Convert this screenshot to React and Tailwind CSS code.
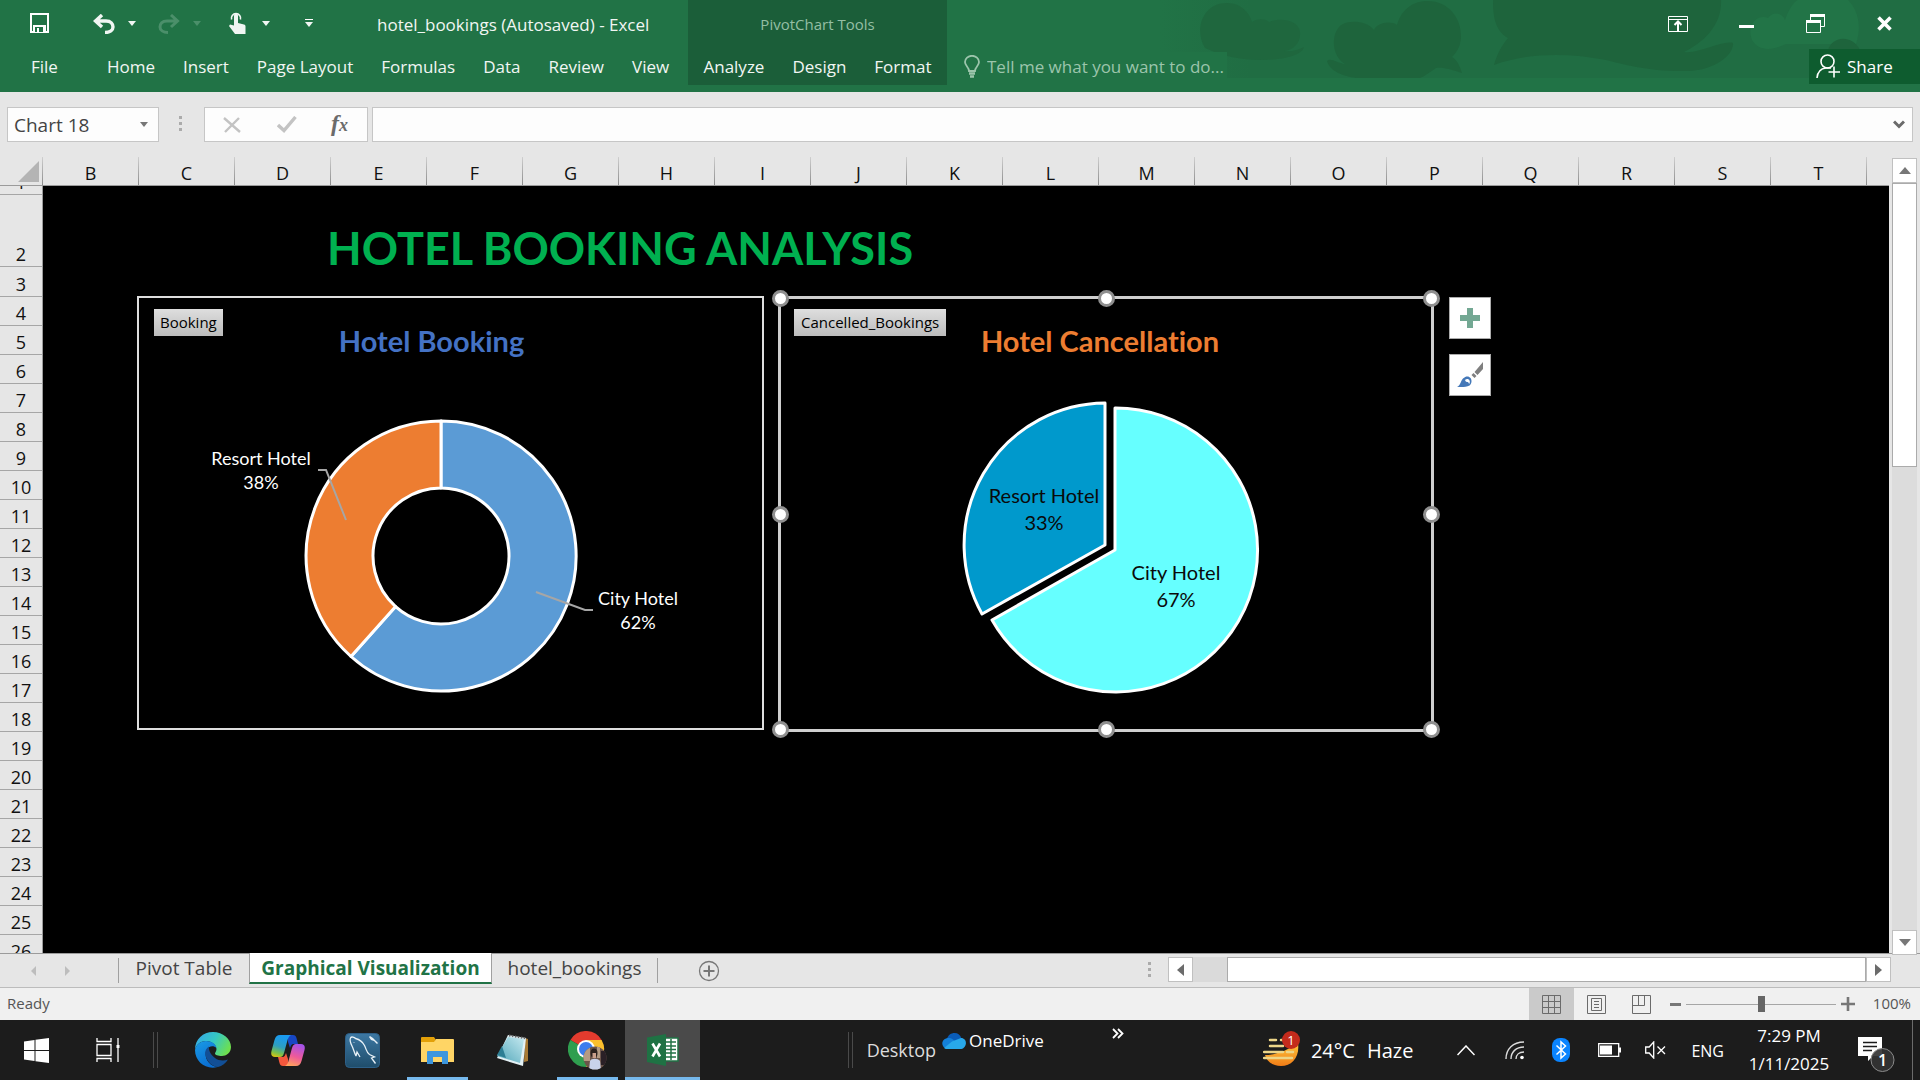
import React from 'react';

const columns = 'BCDEFGHIJKLMNOPQRST'.split('');
const rows = Array.from({ length: 23 }, (_, i) => i + 4);
const mainTabs = ['Home', 'Insert', 'Page Layout', 'Formulas', 'Data', 'Review', 'View'];
const chartTabs = ['Analyze', 'Design', 'Format'];

function Caret({ className = '' }) {
  return (
    <svg className={className} width="8" height="5" viewBox="0 0 8 5" fill="currentColor" aria-hidden="true">
      <path d="M0 0h8L4 5z" />
    </svg>
  );
}

function HeaderArt() {
  return (
    <svg className="pointer-events-none absolute right-0 top-0" width="760" height="78" viewBox="1160 0 760 78" aria-hidden="true">
      <defs>
        <linearGradient id="shade" x1="0" x2="1" y1="0" y2="0">
          <stop offset="0" stopColor="#217346" />
          <stop offset="0.12" stopColor="#206d43" />
          <stop offset="1" stopColor="#206d43" />
        </linearGradient>
      </defs>
      <rect x="1160" width="760" height="78" fill="url(#shade)" />
      <g fill="#1f673e">
        <path d="M1205 48C1194 30 1202 3 1227 3C1242 3 1250 14 1252 22C1258 18 1266 19 1269 22C1280 17 1299 20 1300 32C1301 42 1294 50 1284 51C1292 52 1298 50 1304 47C1302 56 1280 60 1262 60C1240 60 1222 56 1205 48z" />
      </g>
      <g fill="#1e643c">
        <path d="M1345 64C1330 55 1331 30 1343 24C1351 20 1367 21 1374 30C1377 23 1390 20 1397 25C1402 8 1414 1 1428 1C1448 1 1462 18 1461 38C1460 48 1456 53 1452 57C1457 60 1460 66 1462 73C1452 70 1444 67 1436 68C1430 72 1425 76 1420 78H1356C1344 76 1330 72 1327 61C1330 57 1338 63 1345 64z" />
        <path d="M1493 0H1721C1722 18 1712 38 1684 52C1700 54 1722 40 1733 43C1734 54 1716 70 1688 71C1650 72 1622 64 1606 60C1570 53 1530 52 1494 65C1497 54 1502 45 1508 38C1494 30 1493 14 1493 0z" />
      </g>
      <path d="M1752 40C1746 24 1758 14 1768 18C1774 10 1783 14 1785 20C1790 6 1796 0 1798 0H1848C1858 10 1862 26 1856 44H1786C1770 52 1758 50 1752 40z" fill="#227447" />
      <path d="M1828 50C1832 36 1852 34 1860 50z" fill="#1e643c" />
    </svg>
  );
}

function TitleBar() {
  return (
    <header className="relative flex h-[92px] shrink-0 bg-[#217346] text-[17px] text-[#f1f6f3]">
      <HeaderArt />
      <div className="relative w-[688px] shrink-0">
        <div className="flex h-[49px] items-center">
          <button aria-label="Save" className="ml-[30px] pb-1">
            <svg width="19" height="20" viewBox="0 0 19 20" fill="none" aria-hidden="true">
              <path d="M1 1h17v18H1z" stroke="#fff" strokeWidth="2" />
              <path d="M3 12h13v7H3z" fill="#fff" />
              <path d="M5 14h8v5H5z" fill="#217346" />
              <path d="M7 15h2v4H7z" fill="#fff" />
            </svg>
          </button>
          <button aria-label="Undo" className="ml-11 pb-0.5">
            <svg width="22" height="20" viewBox="0 0 22 20" fill="none" stroke="currentColor" strokeWidth="3.4" aria-hidden="true">
              <path d="M9 1L2.500 7L9 13M3 7H13C18 7 20 10 20 13C20 16 17 18.500 12 18.500" />
            </svg>
          </button>
          <button aria-label="Undo history" className="ml-[13px] pb-0.5"><Caret /></button>
          <button aria-label="Redo" className="ml-[22px] pb-0.5 text-[#4b8f6a]">
            <svg width="22" height="20" viewBox="0 0 22 20" fill="none" stroke="currentColor" strokeWidth="3" aria-hidden="true">
              <path d="M13 1L19.500 7L13 13M19 7H9C4 7 2 10 2 13C2 16 5 18.500 10 18.500" />
            </svg>
          </button>
          <button aria-label="Redo history" className="ml-[13px] pb-0.5 text-[#4b8f6a]"><Caret /></button>
          <button aria-label="Touch or mouse mode" className="ml-7 pb-1">
            <svg width="17" height="22" viewBox="0 0 17 22" fill="none" aria-hidden="true">
              <path d="M5 9V3.500a2 2 0 0 1 4 0V11l6 1.500c1 .4 1.500 1 1.500 2V22H6L0 14l1-1.500 4 1z" fill="currentColor" />
              <path d="M2.600 7.500a4.600 4.600 0 1 1 8.800 0" stroke="currentColor" strokeWidth="1.600" />
            </svg>
          </button>
          <button aria-label="Touch mode options" className="ml-4 pb-0.5"><Caret /></button>
          <button aria-label="Customize Quick Access Toolbar" className="ml-[35px] flex flex-col gap-0.5 pb-1">
            <span className="h-px w-2 bg-white" />
            <Caret />
          </button>
          <h1 className="ml-16 whitespace-nowrap">hotel_bookings (Autosaved) - Excel</h1>
        </div>
        <nav className="flex h-[35px] items-center whitespace-nowrap" aria-label="Ribbon">
          <button className="ml-[31px] mr-[21px]">File</button>
          <div className="ml-7 flex gap-7">
            {mainTabs.map((t) => <button key={t}>{t}</button>)}
          </div>
        </nav>
      </div>
      <div className="relative h-[85px] w-[259px] shrink-0 bg-[#1b5e39]">
        <div className="flex h-[49px] items-center justify-center text-[15px] text-[#94bea4]">PivotChart Tools</div>
        <nav className="flex h-[35px] items-center justify-center gap-7" aria-label="PivotChart Tools">
          {chartTabs.map((t) => <button key={t}>{t}</button>)}
        </nav>
      </div>
      <div className="relative min-w-0 flex-1">
        <div className="flex h-[47px] items-center justify-end text-white">
          <button aria-label="Ribbon display options">
            <svg width="20" height="16" viewBox="0 0 20 16" fill="none" stroke="currentColor" strokeWidth="1" aria-hidden="true">
              <path d="M.5.5h19v15H.5zM.5 3.500h19" />
              <path d="M10 15V6M6.500 9L10 5.500 13.500 9" strokeWidth="2" />
            </svg>
          </button>
          <button aria-label="Minimize" className="ml-[51px] mt-1.5 h-[3px] w-[15px] bg-white" />
          <button aria-label="Restore" className="ml-[52px]">
            <svg width="19" height="19" viewBox="0 0 19 19" fill="none" stroke="currentColor" aria-hidden="true">
              <path d="M.5 8v10.500h14V7" />
              <path d="M0 7.500h15" strokeWidth="3" />
              <path d="M4.500 6V1M18.500 1v11.500H15" />
              <path d="M4 1.500h15" strokeWidth="3" />
            </svg>
          </button>
          <button aria-label="Close" className="ml-[52px] mr-[28px]">
            <svg width="15" height="15" viewBox="0 0 15 15" stroke="currentColor" strokeWidth="3.600" aria-hidden="true">
              <path d="M1.500 1.500l12 12M13.500 1.500l-12 12" />
            </svg>
          </button>
        </div>
        <div className="mt-0.5 flex h-[35px] items-center justify-between">
          <label className="flex h-[29px] items-center gap-[7px] bg-[#217346] pl-[17px] text-[#9cc5ac]">
            <svg width="16" height="23" viewBox="0 0 16 23" fill="none" stroke="currentColor" strokeWidth="1.800" aria-hidden="true">
              <path d="M5 16c0-4-4-5-4-9a7 6.200 0 0 1 14 0c0 4-4 5-4 9z" />
              <path d="M5 18.500h6M6 21.500h4" strokeWidth="2.500" />
            </svg>
            <input className="w-60 bg-transparent outline-none placeholder:text-[#9cc5ac]" placeholder="Tell me what you want to do..." aria-label="Tell me what you want to do" />
          </label>
          <button className="flex h-[35px] w-[111px] items-center gap-[7px] bg-[#0e5c2f] pl-[7px] text-white">
            <svg width="24" height="25" viewBox="0 0 24 25" fill="none" stroke="currentColor" strokeWidth="1.600" aria-hidden="true">
              <circle cx="11.500" cy="7.500" r="6.500" />
              <path d="M1 24c.5-6 4-9.500 9-10h5M18 12.500v11M12.500 18H24" />
            </svg>
            Share
          </button>
        </div>
      </div>
    </header>
  );
}

function Dots({ className }) {
  return (
    <span className={`flex flex-col gap-[3px] ${className}`}>
      <i className="size-[3px] bg-[#ababab]" />
      <i className="size-[3px] bg-[#ababab]" />
      <i className="size-[3px] bg-[#ababab]" />
    </span>
  );
}

function FormulaBar() {
  return (
    <div className="flex h-[65px] shrink-0 items-start bg-[#e6e6e6] pl-[7px] pr-[7px] pt-[15px]">
      <div className="flex h-[35px] w-[152px] items-center border border-[#c6c6c6] bg-[#fdfdfd] text-[#444]">
        <input aria-label="Name box" defaultValue="Chart 18" className="w-[132px] bg-transparent pl-1.5 pt-px text-[19px] outline-none" />
        <button aria-label="Name list" className="text-[#777]"><Caret /></button>
      </div>
      <Dots className="ml-5 mt-[9px]" />
      <div className="ml-[22px] flex h-[35px] w-[164px] items-center border border-[#c6c6c6] bg-[#fdfdfd]">
        <button aria-label="Cancel" className="ml-[18px]">
          <svg width="18" height="16" viewBox="0 0 18 16" stroke="#c3c3c3" strokeWidth="2.400" aria-hidden="true">
            <path d="M1 1l16 14M16 1L2 15" />
          </svg>
        </button>
        <button aria-label="Enter" className="ml-9">
          <svg width="20" height="17" viewBox="0 0 20 17" fill="none" stroke="#c3c3c3" strokeWidth="3.400" aria-hidden="true">
            <path d="M1 9l6 5.500L18.500 1" />
          </svg>
        </button>
        <button aria-label="Insert function" className="ml-[34px] pb-0.5 font-['Liberation_Serif',serif] text-[24px] font-bold italic leading-6 text-[#6b6b6b]">
          f<span className="text-[18px]">x</span>
        </button>
      </div>
      <div className="ml-1 flex h-[35px] min-w-0 flex-1 items-center border border-[#c6c6c6] bg-[#fdfdfd]">
        <input aria-label="Formula" className="min-w-0 flex-1 bg-transparent px-2 outline-none" />
        <button aria-label="Expand formula bar" className="mr-[7px]">
          <svg width="12" height="9" viewBox="0 0 12 9" fill="none" stroke="#6b6b6b" strokeWidth="3" aria-hidden="true">
            <path d="M1 1.500l5 5 5-5" />
          </svg>
        </button>
      </div>
    </div>
  );
}

function ColumnHeaders() {
  return (
    <div className="flex h-[29px] shrink-0 overflow-hidden border-b border-[#9b9b9b] bg-[#e6e6e6] text-[18px] text-[#111]">
      <button aria-label="Select all" className="flex w-[42px] shrink-0 items-end justify-end pb-[3px] pr-[3px]">
        <svg width="21" height="21" viewBox="0 0 21 21" fill="#b4b4b4" aria-hidden="true"><path d="M21 0v21H0z" /></svg>
      </button>
      <span className="w-px shrink-0 bg-linear-to-t from-[#8c8c8c] to-[#cfcfcf]" />
      {columns.map((c) => (
        <div key={c} className="flex w-24 shrink-0">
          <span className="flex-1 pt-1 text-center leading-6">{c}</span>
          <span className="w-px bg-linear-to-t from-[#8c8c8c] to-[#cfcfcf]" />
        </div>
      ))}
    </div>
  );
}

function RowHeader({ n, className }) {
  return (
    <div className={`flex shrink-0 items-end justify-center overflow-hidden border-b border-[#a6a6a6] leading-6 ${className}`}>{n}</div>
  );
}

function DonutChart() {
  return (
    <figure className="relative h-[434px] w-[627px] shrink-0 border-2 border-[#dedede] pt-[25px]">
      <button className="absolute left-[15px] top-[11px] h-[27px] bg-linear-to-b from-[#dedede] to-[#bcbcbc] px-[6px] text-[15px] leading-[27px] text-black">Booking</button>
      <h3 className="pr-[38px] text-center font-[Lato,sans-serif] text-[29px] font-bold leading-9 text-[#4472c4]">Hotel Booking</h3>
      <svg className="mt-px block w-full" viewBox="0 0 623 368" role="img" aria-label="City Hotel 62%, Resort Hotel 38%">
        <g stroke="#fff" strokeWidth="3" strokeLinejoin="round">
          <path d="M302 61A135 135 0 1 1 212 296.500L256.600 246.600A68 68 0 1 0 302 128z" fill="#5b9bd5" />
          <path d="M212 296.500A135 135 0 0 1 302 61V128A68 68 0 0 0 256.600 246.600z" fill="#ed7d31" />
        </g>
        <path d="M179 110h8l20 50M397 232l49 18h8" fill="none" stroke="#a6a6a6" strokeWidth="2" />
        <g fill="#fff" textAnchor="middle" className="font-[Lato,sans-serif] text-[18px]">
          <text x="122" y="105">Resort Hotel</text>
          <text x="122" y="129">38%</text>
          <text x="499" y="245">City Hotel</text>
          <text x="499" y="269">62%</text>
        </g>
      </svg>
    </figure>
  );
}

function Handle({ className }) {
  return <span className={`absolute size-[17px] rounded-full border-[3px] border-[#8f8f8f] bg-white ${className}`} />;
}

function PieChart() {
  return (
    <figure className="relative ml-3.5 h-[436px] w-[656px] shrink-0 border-[3px] border-[#cfcfcf] pt-6">
      <button className="absolute left-[13px] top-[10px] h-[27px] bg-linear-to-b from-[#dedede] to-[#bcbcbc] px-[7px] text-[15px] leading-[27px] text-black">Cancelled_Bookings</button>
      <h3 className="pr-3 text-center font-[Lato,sans-serif] text-[29px] font-bold leading-9 text-[#ed7d31] [font-variant-ligatures:none]">Hotel Cancellation</h3>
      <svg className="mt-px block w-full" viewBox="0 0 650 368" role="img" aria-label="City Hotel 67%, Resort Hotel 33%">
        <g stroke="#fff" strokeWidth="3" strokeLinejoin="round">
          <path d="M334 190V48A142 142 0 1 1 211 260z" fill="#66ffff" />
          <path d="M324 185L201 254A142 142 0 0 1 324 43z" fill="#0099cc" />
        </g>
        <g fill="#0a0a0a" textAnchor="middle" className="font-[Lato,sans-serif] text-[20px]">
          <text x="263" y="143">Resort Hotel</text>
          <text x="263" y="170">33%</text>
          <text x="395" y="220">City Hotel</text>
          <text x="395" y="247">67%</text>
        </g>
      </svg>
      <Handle className="-left-[9px] -top-[9px]" />
      <Handle className="-top-[9px] left-[calc(50%-8px)]" />
      <Handle className="-right-[9px] -top-[9px]" />
      <Handle className="-left-[9px] top-[calc(50%-8px)]" />
      <Handle className="-right-[9px] top-[calc(50%-8px)]" />
      <Handle className="-bottom-[9px] -left-[9px]" />
      <Handle className="-bottom-[9px] left-[calc(50%-8px)]" />
      <Handle className="-bottom-[9px] -right-[9px]" />
    </figure>
  );
}

function ChartButtons() {
  return (
    <div className="ml-[15px] mt-px flex flex-col gap-[15px]">
      <button aria-label="Chart elements" className="flex size-[42px] items-center justify-center border border-[#ababab] bg-white">
        <svg width="20" height="20" viewBox="0 0 20 20" fill="#73a893" aria-hidden="true"><path d="M7 0h6v7h7v6h-7v7H7v-7H0V7h7z" /></svg>
      </button>
      <button aria-label="Chart styles" className="flex size-[42px] items-center justify-center border border-[#ababab] bg-white">
        <svg width="26" height="26" viewBox="0 0 26 26" aria-hidden="true">
          <path d="M26 0v7l-5.500 6-3-3zM16.500 11l3 3-2 2-3-3z" fill="#7f7f7f" />
          <path d="M0 25c4-2 3-5 6-8.500 3-3 6-2.500 7.500-.5s1.500 5.500-1 7.500C9 25.500 4 25 0 25z" fill="#4478b8" />
          <path d="M8 18c1.500-1.500 4-1 4.500 .5.8 1.500 0 3-.5 3.800 0-1.800-1-2.300-2-2.300-1 0-1.500-1-2-2z" fill="#fff" />
        </svg>
      </button>
    </div>
  );
}

function Sheet() {
  return (
    <div className="flex min-h-0 flex-1 bg-[#e6e6e6]">
      <div className="flex min-w-0 flex-1 flex-col">
        <ColumnHeaders />
        <div className="flex min-h-0 flex-1">
          <div className="flex w-[43px] shrink-0 flex-col overflow-hidden border-r border-[#9b9b9b] text-[18px] text-[#111]">
            <RowHeader n={1} className="h-[9px]" />
            <RowHeader n={2} className="h-[72px]" />
            <RowHeader n={3} className="h-[30px]" />
            {rows.map((n) => <RowHeader key={n} n={n} className="h-[29px]" />)}
          </div>
          <main className="min-w-0 flex-1 overflow-hidden bg-black">
            <h2 className="whitespace-nowrap pl-[284px] pt-[35px] font-[Lato,sans-serif] text-[45px] font-bold leading-[54px] text-[#00b050]">HOTEL BOOKING ANALYSIS</h2>
            <div className="ml-[94px] mt-[21px] flex items-start">
              <DonutChart />
              <PieChart />
              <ChartButtons />
            </div>
          </main>
        </div>
      </div>
      <div className="-mb-0.5 flex w-[31px] shrink-0 flex-col pl-[3px] pr-[3px] pt-px">
        <button aria-label="Scroll up" className="flex h-[25px] w-[25px] shrink-0 items-center justify-center border border-[#c0c0c0] bg-white">
          <svg width="12" height="7" viewBox="0 0 12 7" fill="#777" aria-hidden="true"><path d="M0 7h12L6 0z" /></svg>
        </button>
        <div className="w-[25px] flex-1 bg-[#dcdcdc]">
          <div className="h-[38%] border border-[#ababab] bg-white" />
        </div>
        <button aria-label="Scroll down" className="relative flex h-[25px] w-[25px] shrink-0 items-center justify-center border border-[#c0c0c0] bg-white">
          <svg width="12" height="7" viewBox="0 0 12 7" fill="#777" aria-hidden="true"><path d="M0 0h12L6 7z" /></svg>
        </button>
      </div>
    </div>
  );
}

function SheetTabs() {
  return (
    <div className="flex h-[35px] shrink-0 items-start border-b border-t border-b-[#bcbcbc] border-t-[#9b9b9b] bg-[#e6e6e6] text-[19px] text-[#444]">
      <button aria-label="Previous sheet" className="ml-[31px] mt-3">
        <svg width="5" height="10" viewBox="0 0 5 10" fill="#bdbdbd" aria-hidden="true"><path d="M5 0v10L0 5z" /></svg>
      </button>
      <button aria-label="Next sheet" className="ml-[29px] mt-3">
        <svg width="5" height="10" viewBox="0 0 5 10" fill="#bdbdbd" aria-hidden="true"><path d="M0 0v10l5-5z" /></svg>
      </button>
      <span className="ml-12 mt-1 h-[25px] w-px bg-[#a0a0a0]" />
      <button className="w-[130px] leading-[29px]">Pivot Table</button>
      <button className="-mt-px h-[31px] w-[243px] border-x border-b-2 border-x-[#a0a0a0] border-b-[#217346] bg-white pt-px font-bold leading-7 text-[#217346]">Graphical Visualization</button>
      <button className="w-[165px] leading-[29px]">hotel_bookings</button>
      <span className="mt-1 h-[25px] w-px bg-[#a0a0a0]" />
      <button aria-label="New sheet" className="ml-10 mt-1.5">
        <svg width="22" height="22" viewBox="0 0 22 22" fill="none" stroke="#777" aria-hidden="true">
          <circle cx="11" cy="11" r="9.500" strokeWidth="1.300" />
          <path d="M11 5.500v11M5.500 11h11" strokeWidth="2" />
        </svg>
      </button>
      <Dots className="ml-auto mt-2" />
      <div className="ml-[17px] mr-[29px] mt-[3px] flex h-[25px] w-[723px]">
        <button aria-label="Scroll left" className="flex w-[25px] items-center justify-center border border-[#c0c0c0] bg-white">
          <svg width="7" height="12" viewBox="0 0 7 12" fill="#6b6b6b" aria-hidden="true"><path d="M7 0v12L0 6z" /></svg>
        </button>
        <div className="flex flex-1 bg-[#dadada] pl-[34px]">
          <div className="flex-1 border border-[#ababab] bg-white" />
        </div>
        <button aria-label="Scroll right" className="flex w-[25px] items-center justify-center border border-[#c0c0c0] bg-white">
          <svg width="7" height="12" viewBox="0 0 7 12" fill="#6b6b6b" aria-hidden="true"><path d="M0 0v12l7-6z" /></svg>
        </button>
      </div>
    </div>
  );
}

function StatusBar() {
  return (
    <div className="flex h-8 shrink-0 items-center bg-[#f0f0f0] text-[15px] text-[#555]">
      <span className="ml-[7px] pb-0.5">Ready</span>
      <button aria-label="Normal view" className="ml-auto flex h-full w-[45px] items-center justify-center bg-[#cacaca]">
        <svg width="19" height="19" viewBox="0 0 19 19" fill="none" stroke="#6b6b6b" aria-hidden="true">
          <path d="M.5.5h18v18H.5zM.5 6.500h18M.5 12.500h18M6.500.5v18M12.500.5v18" />
        </svg>
      </button>
      <button aria-label="Page layout view" className="flex w-[45px] justify-center">
        <svg width="19" height="19" viewBox="0 0 19 19" fill="none" stroke="#6b6b6b" aria-hidden="true">
          <path d="M.5.5h18v18H.5zM4.500 3.500h10v12h-10zM7 6.500h5M7 9.500h5M7 12.500h5" />
        </svg>
      </button>
      <button aria-label="Page break preview" className="flex w-[45px] justify-center">
        <svg width="19" height="19" viewBox="0 0 19 19" fill="none" stroke="#6b6b6b" aria-hidden="true">
          <path d="M.5.5h18v18H.5zM.5 10.500h12V.5M6.500.5v10" />
        </svg>
      </button>
      <button aria-label="Zoom out" className="ml-1.5 h-[3px] w-[11px] bg-[#777]" />
      <input
        type="range"
        aria-label="Zoom"
        min="10"
        max="190"
        defaultValue="100"
        className="mx-[5px] h-px w-[150px] appearance-none bg-[#a6a6a6] [&::-webkit-slider-thumb]:h-4 [&::-webkit-slider-thumb]:w-[7px] [&::-webkit-slider-thumb]:appearance-none [&::-webkit-slider-thumb]:bg-[#666]"
      />
      <button aria-label="Zoom in">
        <svg width="14" height="14" viewBox="0 0 14 14" stroke="#777" strokeWidth="2.600" aria-hidden="true"><path d="M7 0v14M0 7h14" /></svg>
      </button>
      <span className="ml-4 mr-[9px] w-10 pb-0.5 text-right">100%</span>
    </div>
  );
}

const EdgeIcon = () => (
  <svg width="36" height="36" viewBox="0 0 36 36" aria-hidden="true">
    <defs>
      <linearGradient id="edgeTop" x1="0" x2="1" y1="0.200" y2="0.600">
        <stop offset="0" stopColor="#35a8e8" /><stop offset="0.500" stopColor="#35c8c4" /><stop offset="1" stopColor="#6fe04c" />
      </linearGradient>
      <linearGradient id="edgeLeft" x1="0" x2="0.500" y1="0" y2="1">
        <stop offset="0" stopColor="#1a9be6" /><stop offset="1" stopColor="#0a6ed1" />
      </linearGradient>
    </defs>
    <path d="M0 18C0 7 8 0 18 0s18 7 18 15c0 6-5 9-9 9-4 0-7-1-7-2.500 0-1 1.500-2 1.500-4.500C21 12 16 9 11 9 5 9 1 13 0 18z" fill="url(#edgeTop)" />
    <path d="M0 18C1 13 5 9 11 9s10 3 10.500 7c-3-3-8-2-10 2-3 7 2 16 11 17C11 38 0 30 0 18z" fill="url(#edgeLeft)" />
    <path d="M14 14.500c-3 2-4.500 5-3.500 9C12 30 18 35 23 35c4-1 8-4 10-7.500-4 1.500-9 1.500-13-1.500-4-3-6.500-7-6-11.500z" fill="#124f96" />
  </svg>
);

const CopilotIcon = () => (
  <svg width="34" height="31" viewBox="0 0 34 31" aria-hidden="true">
    <defs>
      <linearGradient id="copA" x1="0.300" x2="0" y1="0" y2="1">
        <stop offset="0" stopColor="#1a9af0" /><stop offset="0.450" stopColor="#2e9fc0" /><stop offset="0.750" stopColor="#7cc04a" /><stop offset="1" stopColor="#f5c400" />
      </linearGradient>
      <linearGradient id="copB" x1="0.600" x2="0.300" y1="0" y2="1">
        <stop offset="0" stopColor="#a552e8" /><stop offset="0.550" stopColor="#ee5a9a" /><stop offset="1" stopColor="#ffa35c" />
      </linearGradient>
    </defs>
    <path d="M17 0h5c2 0 3 1 3.500 3L27 9h-4c-3 0-3 2-4 4l-2-6z" fill="#1747c4" />
    <path d="M17 31h-5c-2 0-3-1-3.500-3L7 22h4c3 0 3-2 4-4l2 6z" fill="#f3573c" />
    <path d="M9 0h11c-2 1-3 3-4 7l-3 11c-1 3-2 4-4 4H4c-3 0-4.500-2-3.500-6l3-11C4.500 1.500 6 0 9 0z" fill="url(#copA)" />
    <path d="M25 31H14c2-1 3-3 4-7l3-11c1-3 2-4 4-4h5c3 0 4.500 2 3.500 6l-3 11c-1 3.500-2.500 5-5.500 5z" fill="url(#copB)" />
  </svg>
);

const WorkbenchIcon = () => (
  <svg width="35" height="35" viewBox="0 0 35 35" fill="none" aria-hidden="true">
    <defs>
      <linearGradient id="wb" x1="0" x2="0" y1="0" y2="1"><stop offset="0" stopColor="#3d78a3" /><stop offset="1" stopColor="#1f4d6b" /></linearGradient>
    </defs>
    <rect x="0.500" y="0.500" width="34" height="34" rx="4" fill="url(#wb)" stroke="#2e6088" />
    <path d="M11 23c-2-4-2.500-7-4-10-1.500-3-2.500-6-1.500-8s4-.5 5 .5c4 1 7 3 9 7 2 4 2 7 5 9l5 2.500-3 1 4 5.500M11 23l1-4 3 5M9 9.500v.5" stroke="#e8f1f7" strokeWidth="1.300" />
    <path d="M25 3l3 2 3 3 2 2-1 1-3-3-3-1-2-3z" fill="#e8f1f7" />
  </svg>
);

const FolderIcon = () => (
  <svg width="33" height="27" viewBox="0 0 33 27" aria-hidden="true">
    <path d="M0 1a1 1 0 0 1 1-1h12l2 3h-1v5H0z" fill="#e3a008" />
    <path d="M0 5h13l2-3h17a1 1 0 0 1 1 1v22H0z" fill="#ffd565" />
    <path d="M6 27V15a1 1 0 0 1 1-1h19a1 1 0 0 1 1 1v12h-6v-7h-9v7z" fill="#3d96dd" />
  </svg>
);

const NotepadIcon = () => (
  <svg width="33" height="32" viewBox="0 0 33 32" aria-hidden="true">
    <defs>
      <linearGradient id="np" x1="0" x2="1" y1="1" y2="0"><stop offset="0" stopColor="#4fa5b8" /><stop offset="1" stopColor="#c5e9f0" /></linearGradient>
    </defs>
    <path d="M29 4l3 1v22l-4 1z" fill="#a87a35" />
    <path d="M12 1l18 3-3 28L1 24z" fill="#e4f1f5" />
    <path d="M12 3l16 2-4 24L1 22z" fill="url(#np)" />
    <path d="M1 21l5-9 4 12z" fill="#2d7e94" />
    <path d="M13 1.500l17 3" stroke="#666" strokeWidth="2" strokeDasharray="1.500 1.500" />
  </svg>
);

const ChromeIcon = () => (
  <svg width="39" height="39" viewBox="0 0 39 39" aria-hidden="true">
    <defs>
      <clipPath id="avatar"><circle cx="27" cy="27" r="11.500" /></clipPath>
    </defs>
    <path d="M18 18L2.400 9A18 18 0 0 1 33.600 9z" fill="#e33b2e" />
    <path d="M18 18L2.400 9A18 18 0 0 0 18 36L26 22z" fill="#2f9e4f" />
    <path d="M18 9H33.600A18 18 0 0 1 18 36L26 22z" fill="#fbc02d" />
    <circle cx="18" cy="18" r="9" fill="#fff" />
    <circle cx="18" cy="18" r="7" fill="#3b7ded" />
    <g clipPath="url(#avatar)">
      <path d="M15 15h24v24H15z" fill="#6b554a" />
      <path d="M15 15h7v15h-7z" fill="#b49b84" />
      <path d="M29 15h3v12h-3z" fill="#b49b84" />
      <path d="M33 20h6v14h-6z" fill="#2a2026" />
      <ellipse cx="26" cy="22" rx="3.500" ry="4.500" fill="#2b211e" />
      <path d="M21 39l1-9c1-3 8-3 10 0l1 9z" fill="#c9d2ea" />
      <path d="M24.500 22h3.500v5h-3.500z" fill="#caa08c" />
    </g>
  </svg>
);

const ExcelIcon = () => (
  <svg width="32" height="32" viewBox="0 0 32 32" aria-hidden="true">
    <path d="M18 4h13v23H18z" fill="#fff" stroke="#217346" strokeWidth="1.500" />
    <path d="M19 8h10M19 12h10M19 15.500h10M19 19h10M19 23h10M24 5v21" stroke="#217346" strokeWidth="1.500" />
    <path d="M0 3.500L19 0v32L0 28z" fill="#1f7244" />
    <path d="M5.500 9.500l7.500 13M13 9.500l-7.500 13" stroke="#fff" strokeWidth="2.600" />
  </svg>
);

const WeatherIcon = () => (
  <svg width="38" height="38" viewBox="0 0 38 38" aria-hidden="true">
    <defs>
      <linearGradient id="sun" x1="0" x2="0" y1="0" y2="1"><stop offset="0" stopColor="#ffc83d" /><stop offset="1" stopColor="#f07c17" /></linearGradient>
    </defs>
    <path d="M2 24C12 24 24 20 35 12C37 26 29 35 18 35C10 35 4 31 2 24z" fill="url(#sun)" />
    <path d="M7 9h6M18 9h6M7 15h13M1 21h19M24 21h6M1 27h28" stroke="#ecd588" strokeWidth="2.500" strokeLinecap="round" />
    <circle cx="28" cy="9" r="9" fill="#c42b1c" />
    <text x="28" y="14" textAnchor="middle" fill="#fff" className="text-[13px]">1</text>
  </svg>
);

const pinned = [
  ['Microsoft Edge', EdgeIcon, ''],
  ['Copilot', CopilotIcon, ''],
  ['MySQL Workbench', WorkbenchIcon, ''],
  ['File Explorer', FolderIcon, 'open'],
  ['Notepad', NotepadIcon, ''],
  ['Google Chrome', ChromeIcon, 'open'],
  ['Excel', ExcelIcon, 'active'],
];

function Taskbar() {
  return (
    <footer className="flex h-[60px] shrink-0 items-center whitespace-nowrap bg-[#1c1c1c] text-[17px] text-white">
      <button aria-label="Start" className="ml-6">
        <svg width="25" height="25" viewBox="0 0 25 25" fill="#fff" aria-hidden="true">
          <path d="M0 3.500l10.500-1.500v10H0zM11.500 1.800L25 0v12H11.500zM0 13h10.500v10L0 21.500zM11.500 13H25v12l-13.500-1.800z" />
        </svg>
      </button>
      <button aria-label="Task view" className="ml-[47px]">
        <svg width="25" height="24" viewBox="0 0 25 24" fill="none" stroke="#fff" strokeWidth="1.300" aria-hidden="true">
          <path d="M1 0v3.500h14V0M1 6.500h14v11H1zM1 24v-3.500h14V24M22 0v24" />
          <path d="M20.500 7h3v3h-3z" fill="#fff" stroke="none" />
        </svg>
      </button>
      <span className="ml-8 h-9 w-[5px] border-x border-[#4a4a4a]" />
      <div className="ml-[17px] flex h-full">
        {pinned.map(([name, Icon, state]) => (
          <button
            key={name}
            aria-label={name}
            className={`relative flex w-[75px] items-center justify-center ${state === 'active' ? 'border-b-[3px] border-[#76b9ed] bg-[#4a4a4a] pt-[3px]' : ''}`}
          >
            <Icon />
            {state === 'open' && <span className="absolute inset-x-[7px] bottom-0 h-[3px] bg-[#76b9ed]" />}
          </button>
        ))}
      </div>
      <span className="ml-auto h-9 w-[5px] border-x border-[#4a4a4a]" />
      <span className="ml-3.5 text-[18px] text-[#dcdcdc]">Desktop</span>
      <div className="ml-1.5 flex items-center gap-[3px] pb-[18px]">
        <svg width="24" height="16" viewBox="0 0 24 16" aria-hidden="true">
          <path d="M5 6C6 2 9 0 12.500 0S18.500 2 19.500 5.500L12 9z" fill="#0a5cb8" />
          <path d="M6 5c3-.5 5 1 7 3L3 15c-4-2-4-9 3-10z" fill="#1480d8" />
          <path d="M10 8.500l9-3.500c5 0 6.500 6 3 9.500-1 1-2 1.500-4 1.500H5c-1.500 0-2.500-.5-3-1z" fill="#28a8ea" />
        </svg>
        <span className="text-[17px] leading-6">OneDrive</span>
      </div>
      <button aria-label="More toolbar items" className="ml-[68px] pb-[34px]">
        <svg width="12" height="11" viewBox="0 0 12 11" fill="none" stroke="#fff" strokeWidth="1.800" aria-hidden="true">
          <path d="M1 1l4.500 4.500L1 10M6 1l4.500 4.500L6 10" />
        </svg>
      </button>
      <button className="ml-[139px] flex items-center gap-2.5 text-[20px]">
        <WeatherIcon />
        <span className="flex gap-3 pt-0.5"><span>24°C</span><span>Haze</span></span>
      </button>
      <button aria-label="Show hidden icons" className="ml-11">
        <svg width="18" height="11" viewBox="0 0 18 11" fill="none" stroke="#fff" strokeWidth="1.500" aria-hidden="true"><path d="M.5 10L9 1l8.500 9" /></svg>
      </button>
      <button aria-label="Network" className="ml-[30px]">
        <svg width="20" height="19" viewBox="0 0 20 19" fill="none" stroke="#dcdcdc" strokeWidth="1.400" aria-hidden="true">
          <path d="M1 18C1 8 8 1 19 1M6 18C6 11 11 6 19 6M11 18c0-4 3-7 8-7" />
          <circle cx="17" cy="16.500" r="1.800" fill="#fff" stroke="none" />
        </svg>
      </button>
      <button aria-label="Bluetooth" className="ml-[27px]">
        <svg width="18" height="24" viewBox="0 0 18 24" fill="none" aria-hidden="true">
          <rect width="18" height="24" rx="8" fill="#0a84ff" />
          <path d="M4.500 7.500l9 8.500L9 20V4l4.500 4-9 8.500" stroke="#fff" strokeWidth="1.500" />
        </svg>
      </button>
      <button aria-label="Battery" className="ml-7">
        <svg width="23" height="14" viewBox="0 0 23 14" fill="none" aria-hidden="true">
          <path d="M.7.7h20v12.600H.7z" stroke="#fff" strokeWidth="1.300" />
          <path d="M2 2.500h12v9H2zM21 4.500h2v5h-2z" fill="#fff" />
        </svg>
      </button>
      <button aria-label="Volume muted" className="ml-6">
        <svg width="21" height="18" viewBox="0 0 21 18" fill="none" stroke="#fff" strokeWidth="1.300" aria-hidden="true">
          <path d="M.7 6v6h3.500l4.500 5V1L4.200 6zM12.500 5.500l7.500 7.500M20 5.500L12.500 13" />
        </svg>
      </button>
      <button className="ml-[25px] pt-px text-[16px]">ENG</button>
      <button className="ml-[23px] flex w-[84px] flex-col items-center text-[17px] leading-7">
        <span>7:29 PM</span>
        <span>1/11/2025</span>
      </button>
      <button aria-label="Notifications" className="ml-[27px] pt-2">
        <svg width="37" height="37" viewBox="0 0 37 37" aria-hidden="true">
          <path d="M0 1h24v19h-9l-5 5v-5H0z" fill="#fff" />
          <path d="M5 6.500h14M5 10.500h14M5 14.500h9" stroke="#1c1c1c" strokeWidth="1.300" />
          <circle cx="24.500" cy="24" r="11.500" fill="#333" fillOpacity="0.920" stroke="#8a8a8a" />
          <text x="24.500" y="30" textAnchor="middle" fill="#fff" className="text-[16px] font-semibold">1</text>
        </svg>
      </button>
      <span className="ml-[17px] mr-[7px] h-full w-px bg-[#6b6b6b]" />
    </footer>
  );
}

export default function App() {
  return (
    <div className="flex h-screen flex-col overflow-hidden bg-[#e6e6e6] font-['Open_Sans','Noto_Sans',sans-serif]">
      <TitleBar />
      <FormulaBar />
      <Sheet />
      <SheetTabs />
      <StatusBar />
      <Taskbar />
    </div>
  );
}
